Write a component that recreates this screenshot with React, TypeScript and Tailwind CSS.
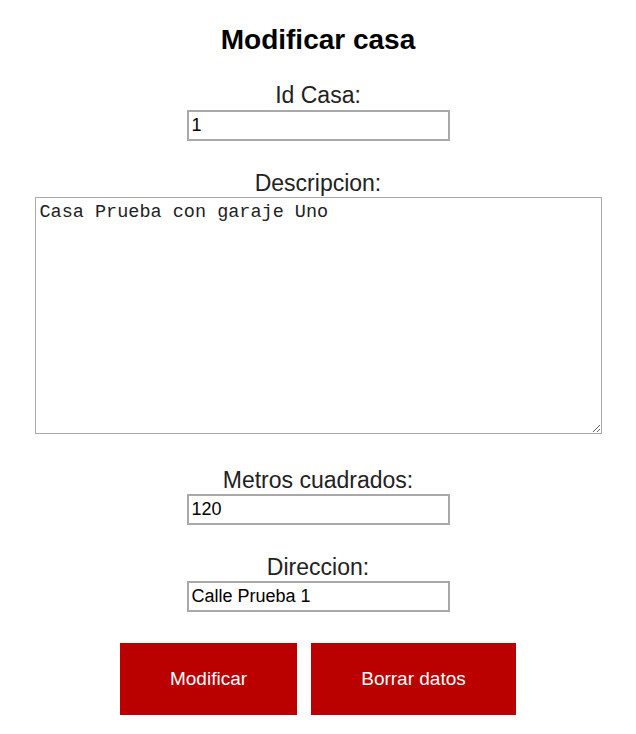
export default function App() {
  return (
    <div className="min-h-[734px] w-[636px] bg-white text-black font-['Liberation_Sans',Arial,sans-serif] flex flex-col items-center">
      <h1 className="mt-[22px] text-[28px] leading-[36px] font-bold">Modificar casa</h1>

      <label className="mt-[24px] text-[23px] leading-[26px] text-[#222]">Id Casa:</label>
      <input
        className="mt-[2px] w-[263px] h-[31px] border-2 border-[#a9a9a9] px-[3px] text-[18px] outline-none"
        defaultValue="1"
        readOnly
      />

      <label className="mt-[29px] text-[23px] leading-[26px] text-[#222]">Descripcion:</label>
      <textarea
        className="mt-[1px] w-[567px] h-[237px] border border-[#a9a9a9] px-[4px] py-[4px] text-[18.5px] leading-[22px] font-['Liberation_Mono',monospace] text-[#222] outline-none"
        defaultValue="Casa Prueba con garaje Uno"
        readOnly
      />

      <label className="mt-[33px] text-[23px] leading-[26px] text-[#222]">Metros cuadrados:</label>
      <input
        className="mt-[1px] w-[263px] h-[31px] border-2 border-[#a9a9a9] px-[3px] text-[18px] outline-none"
        defaultValue="120"
        readOnly
      />

      <label className="mt-[29px] text-[23px] leading-[26px] text-[#222]">Direccion:</label>
      <input
        className="mt-[1px] w-[263px] h-[31px] border-2 border-[#a9a9a9] px-[3px] text-[18px] outline-none"
        defaultValue="Calle Prueba 1"
        readOnly
      />

      <div className="mt-[31px] flex gap-[14px]">
        <button className="w-[177px] h-[72px] bg-[#bb0000] text-white text-[19px]">Modificar</button>
        <button className="w-[205px] h-[72px] bg-[#bb0000] text-white text-[19px]">Borrar datos</button>
      </div>
    </div>
  );
}
